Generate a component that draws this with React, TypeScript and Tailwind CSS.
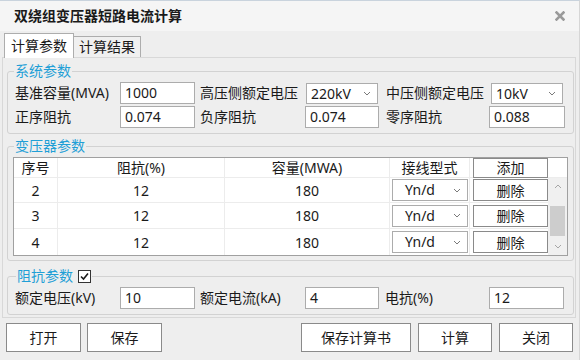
import React from "react";

const Chevron = () => (
  <svg width="8" height="5" viewBox="0 0 8 5" className="shrink-0">
    <path d="M1 1 L4 4 L7 1" fill="none" stroke="#7a7a7a" strokeWidth="1" />
  </svg>
);

const Box = ({ w, children }: { w: string; children: React.ReactNode }) => (
  <div className={`${w} h-[22px] shrink-0 border border-[#acacac] bg-white pl-[4px] leading-[20px]`}>
    {children}
  </div>
);

const Select = ({ w, children }: { w: string; children: React.ReactNode }) => (
  <div className={`${w} h-[21px] shrink-0 border border-[#acacac] bg-white pl-[4px] pr-[6px] flex items-center justify-between leading-[19px]`}>
    <span>{children}</span>
    <Chevron />
  </div>
);

const Label = ({ w, children }: { w: string; children: React.ReactNode }) => (
  <span className={`${w} shrink-0 leading-[22px] whitespace-nowrap`}>{children}</span>
);

const Btn = ({ w, children, h = "h-[29px]" }: { w: string; h?: string; children: React.ReactNode }) => (
  <div className={`${w} ${h} shrink-0 border border-[#8a8a8a] bg-white flex items-center justify-center`}>
    {children}
  </div>
);

const rows = ["2", "3", "4"];

export default function App() {
  return (
    <div className="w-[580px] h-[360px] bg-[#eeeeee] border-t border-r border-t-[#c9d3dd] border-r-[#d6d6d6] flex flex-col text-[14px] text-[#1a1a1a] font-['Noto_Sans','Noto_Sans_CJK_SC',sans-serif] overflow-hidden">
      {/* Title bar */}
      <div className="h-[30px] shrink-0 bg-[#f5f5f5] flex items-center justify-between pl-[14px] pr-[14px]">
        <span className="font-bold leading-[20px]">双绕组变压器短路电流计算</span>
        <svg width="10" height="10" viewBox="0 0 10 10">
          <path d="M1.5 1.5 L8.5 8.5 M8.5 1.5 L1.5 8.5" stroke="#9a9a9a" strokeWidth="2.6" strokeLinecap="square" />
        </svg>
      </div>

      {/* Tabs */}
      <div className="h-[26px] shrink-0 flex items-end pl-[4px]">
        <div className="relative z-10 -mb-px w-[70px] h-[25px] border border-b-0 border-[#adadad] bg-white flex items-center justify-center leading-[20px]">
          计算参数
        </div>
        <div className="w-[67px] h-[21px] border border-l-0 border-b-0 border-[#adadad] bg-[#f0f0f0] flex items-center justify-center leading-[20px]">
          计算结果
        </div>
      </div>

      {/* Tab panel */}
      <div className="ml-[2px] w-[574px] h-[261px] shrink-0 border border-[#d8d8d8] flex flex-col pl-[4px]">
        {/* 系统参数 */}
        <fieldset className="mt-[3px] w-[567px] border border-[#d2d2d2] rounded-[3px] pb-[5px]">
          <legend className="ml-[6px] px-[1px] leading-[20px] text-[#1f9fd6]">系统参数</legend>
          <div className="pt-[1px] pl-[7px] flex flex-col gap-[2px]">
            <div className="flex items-center h-[22px]">
              <Label w="w-[105px]">基准容量(MVA)</Label>
              <Box w="w-[75px]">1000</Box>
              <Label w="ml-[5px] w-[106px]">高压侧额定电压</Label>
              <Select w="w-[72px]">220kV</Select>
              <Label w="ml-[8px] w-[105px]">中压侧额定电压</Label>
              <Select w="w-[72px]">10kV</Select>
            </div>
            <div className="flex items-center h-[22px]">
              <Label w="w-[105px]">正序阻抗</Label>
              <Box w="w-[75px]">0.074</Box>
              <Label w="ml-[5px] w-[105px]">负序阻抗</Label>
              <Box w="w-[74px]">0.074</Box>
              <Label w="ml-[7px] w-[103px]">零序阻抗</Label>
              <Box w="w-[76px]">0.088</Box>
            </div>
          </div>
        </fieldset>

        {/* 变压器参数 */}
        <fieldset className="mt-[2px] w-[567px] border border-[#d2d2d2] rounded-[3px] pb-[4px]">
          <legend className="ml-[6px] px-[1px] leading-[20px] text-[#1f9fd6]">变压器参数</legend>
          <div className="pt-[1px] pl-[5px]">
            <div className="w-[555px] border border-[#a0a0a0] bg-white flex flex-col">
              {/* header */}
              <div className="h-[20px] flex border-b border-[#ececec] leading-[20px]">
                <div className="w-[44px] border-r border-[#ececec] text-center">序号</div>
                <div className="w-[167px] border-r border-[#ececec] text-center">阻抗(%)</div>
                <div className="w-[165px] border-r border-[#ececec] text-center">容量(MWA)</div>
                <div className="w-[80px] border-r border-[#ececec] text-center">接线型式</div>
                <div className="w-[78px] flex items-center pl-[3px]">
                  <Btn w="w-[75px]" h="h-[20px]">添加</Btn>
                </div>
                <div className="w-[19px]" />
              </div>
              {/* body */}
              <div className="flex">
                <div className="w-[534px] flex flex-col">
                  {rows.map((n, i) => (
                    <div
                      key={n}
                      className={`${i === 0 ? "h-[25px]" : "h-[26px]"} flex ${i < 2 ? "border-b border-[#ececec]" : ""}`}
                    >
                      <div className="w-[44px] border-r border-[#ececec] flex items-center justify-center">{n}</div>
                      <div className="w-[167px] border-r border-[#ececec] flex items-center justify-center">12</div>
                      <div className="w-[165px] border-r border-[#ececec] flex items-center justify-center">180</div>
                      <div className="w-[80px] border-r border-[#ececec] flex items-center pl-[2px]">
                        <div className="w-[76px] h-[22px] border border-[#acacac] bg-white flex items-center justify-between pl-[12px] pr-[6px]">
                          <span className="leading-[20px]">Yn/d</span>
                          <Chevron />
                        </div>
                      </div>
                      <div className="w-[78px] flex items-center pl-[3px]">
                        <Btn w="w-[75px]" h="h-[22px]">删除</Btn>
                      </div>
                    </div>
                  ))}
                </div>
                <div className="w-[19px] bg-[#f0f0f0] flex flex-col items-center">
                  <div className="h-[17px] flex items-center justify-center">
                    <svg width="8" height="5" viewBox="0 0 8 5">
                      <path d="M1 4 L4 1 L7 4" fill="none" stroke="#a6a6a6" strokeWidth="1" />
                    </svg>
                  </div>
                  <div className="h-[11px]" />
                  <div className="w-[15px] h-[30px] bg-[#cdcdcd]" />
                  <div className="flex-1" />
                  <div className="h-[17px] flex items-center justify-center">
                    <svg width="8" height="5" viewBox="0 0 8 5">
                      <path d="M1 1 L4 4 L7 1" fill="none" stroke="#a6a6a6" strokeWidth="1" />
                    </svg>
                  </div>
                </div>
              </div>
            </div>
          </div>
        </fieldset>

        {/* 阻抗参数 */}
        <fieldset className="mt-[5px] w-[567px] border border-[#d2d2d2] rounded-[3px] pb-[5px]">
          <legend className="ml-[8px] px-[1px] leading-[20px] text-[#1f9fd6]">
            <span className="flex items-center">
              阻抗参数
              <span className="ml-[5px] w-[13px] h-[13px] border border-[#333333] bg-white flex items-center justify-center">
                <svg width="11" height="11" viewBox="0 0 11 11">
                  <path d="M2 5.5 L4.5 8 L9 2.5" fill="none" stroke="#1a1a1a" strokeWidth="1.6" />
                </svg>
              </span>
            </span>
          </legend>
          <div className="pt-[1px] pl-[7px]">
            <div className="flex items-center h-[22px]">
              <Label w="w-[105px]">额定电压(kV)</Label>
              <Box w="w-[75px]">10</Box>
              <Label w="ml-[5px] w-[105px]">额定电流(kA)</Label>
              <Box w="w-[74px]">4</Box>
              <Label w="ml-[6px] w-[104px]">电抗(%)</Label>
              <Box w="w-[75px]">12</Box>
            </div>
          </div>
        </fieldset>
      </div>

      {/* Bottom buttons */}
      <div className="flex pt-[5px] pl-[6px] pr-[6px]">
        <Btn w="w-[75px]">打开</Btn>
        <div className="ml-[6px]">
          <Btn w="w-[75px]">保存</Btn>
        </div>
        <div className="ml-auto flex gap-[7px]">
          <Btn w="w-[110px]">保存计算书</Btn>
          <Btn w="w-[74px]">计算</Btn>
          <Btn w="w-[74px]">关闭</Btn>
        </div>
      </div>
    </div>
  );
}
